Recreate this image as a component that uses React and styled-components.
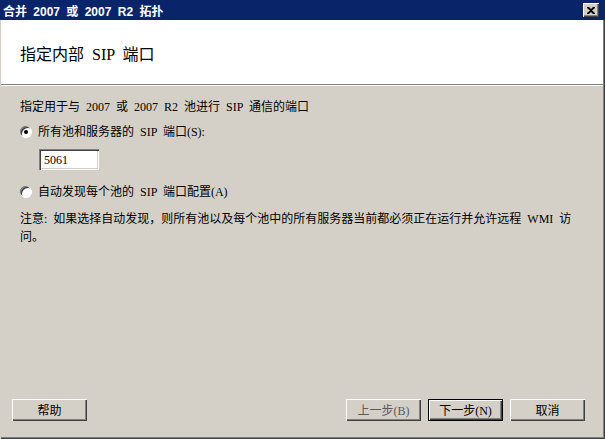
import React from "react";
import styled, { createGlobalStyle } from "styled-components";

const GlobalStyle = createGlobalStyle`
  html, body {
    margin: 0;
    padding: 0;
    background: #d4d0c8;
  }
  * {
    box-sizing: border-box;
  }
`;

const FONT = `"Liberation Serif", "Noto Sans CJK SC", serif`;

export default function App() {
  return (
    <>
      <GlobalStyle />
      <Window>
        <TitleBar>
          <TitleText>合并 2007 或 2007 R2 拓扑</TitleText>
          <CloseButton aria-label="close">
            <svg width="8" height="7" viewBox="0 0 8 7">
              <path d="M0 0h2l2 2 2-2h2v1L5 3.5 8 6v1H6L4 5 2 7H0V6l3-2.5L0 1z" fill="#000" />
            </svg>
          </CloseButton>
        </TitleBar>

        <Header>
          <HeaderTitle>指定内部 SIP 端口</HeaderTitle>
        </Header>

        <Body>
          <Text>指定用于与 2007 或 2007 R2 池进行 SIP 通信的端口</Text>
          <RadioRow $mt={9}>
            <Radio $checked />
            <span>所有池和服务器的 SIP 端口(S):</span>
          </RadioRow>
          <PortInput defaultValue="5061" />
          <RadioRow $mt={14}>
            <Radio />
            <span>自动发现每个池的 SIP 端口配置(A)</span>
          </RadioRow>
          <Note>
            注意: 如果选择自动发现，则所有池以及每个池中的所有服务器当前都必须正在运行并允许远程 WMI 访
            <br />
            问。
          </Note>
        </Body>

        <Footer>
          <Button>帮助</Button>
          <Spacer />
          <Button $disabled>上一步(B)</Button>
          <DefaultButton>下一步(N)</DefaultButton>
          <Button>取消</Button>
        </Footer>
      </Window>
    </>
  );
}

// ==== STYLES ====
const Window = styled.div`
  width: 605px;
  height: 439px;
  display: flex;
  flex-direction: column;
  background: #d4d0c8;
  font-family: ${FONT};
  font-size: 12px;
  color: #000;
  box-shadow: inset 1px 0 0 #d4d0c8, inset -1px -1px 0 #404040,
    inset -2px -2px 0 #808080;
  overflow: hidden;
`;

const TitleBar = styled.div`
  height: 20px;
  background: #0a246a;
  display: flex;
  align-items: center;
  padding: 0 6px 0 3px;
`;

const TitleText = styled.div`
  flex: 1;
  color: #fff;
  font-weight: bold;
  font-size: 12px;
  word-spacing: 3px;
  font-family: "Liberation Sans", "Noto Sans CJK SC", sans-serif;
`;

const CloseButton = styled.div`
  width: 16px;
  height: 14px;
  background: #d4d0c8;
  display: flex;
  align-items: center;
  justify-content: center;
  box-shadow: inset 1px 1px 0 #fff, inset -1px -1px 0 #404040,
    inset -2px -2px 0 #808080;
`;

const Header = styled.div`
  height: 65px;
  background: #fff;
  margin: 0 2px 0 1px;
  border-bottom: 1px solid #808080;
  box-shadow: 0 1px 0 #fff;
  display: flex;
  align-items: center;
  padding-left: 19px;
`;

const HeaderTitle = styled.div`
  font-size: 16px;
  word-spacing: 4px;
  padding-top: 1px;
`;

const Body = styled.div`
  flex: 1;
  padding: 14px 20px 0 20px;
  display: flex;
  flex-direction: column;
`;

const Text = styled.div`
  line-height: 16px;
  word-spacing: 3px;
`;

const RadioRow = styled.div`
  display: flex;
  align-items: center;
  gap: 6px;
  margin-top: ${(p) => p.$mt}px;
  line-height: 16px;
  word-spacing: 3px;
`;

const Radio = styled.span`
  width: 12px;
  height: 12px;
  border-radius: 50%;
  background: #fff;
  flex: none;
  position: relative;
  box-shadow: inset 1px 1px 0 #808080, inset 2px 2px 0 #404040,
    0 0 0 0.5px #d4d0c8;
  border-right: 1px solid #fff;
  border-bottom: 1px solid #fff;
  &::after {
    content: "";
    display: ${(p) => (p.$checked ? "block" : "none")};
    position: absolute;
    left: 4px;
    top: 4px;
    width: 4px;
    height: 4px;
    border-radius: 50%;
    background: #000;
  }
`;

const PortInput = styled.input`
  margin: 9px 0 0 19px;
  width: 60px;
  height: 21px;
  border: none;
  background: #fff;
  font-family: ${FONT};
  font-size: 12px;
  padding: 2px 5px 0;
  outline: none;
  box-shadow: inset 1px 1px 0 #808080, inset 2px 2px 0 #404040,
    inset -1px -1px 0 #fff, inset -2px -2px 0 #d4d0c8;
`;

const Note = styled.div`
  margin-top: 10px;
  line-height: 18px;
  word-spacing: 3px;
`;

const Footer = styled.div`
  display: flex;
  align-items: center;
  gap: 7px;
  padding: 0 20px 18px 12px;
`;

const Spacer = styled.div`
  flex: 1;
`;

const Button = styled.div`
  width: 75px;
  height: 22px;
  display: flex;
  align-items: center;
  justify-content: center;
  background: #d4d0c8;
  color: ${(p) => (p.$disabled ? "#5a5a5a" : "#000")};
  box-shadow: inset 1px 1px 0 #fff, inset -1px -1px 0 #404040,
    inset -2px -2px 0 #808080;
`;

const DefaultButton = styled(Button)`
  box-shadow: inset 0 0 0 1px #000, inset 2px 2px 0 #fff,
    inset -2px -2px 0 #404040, inset -3px -3px 0 #808080;
`;
